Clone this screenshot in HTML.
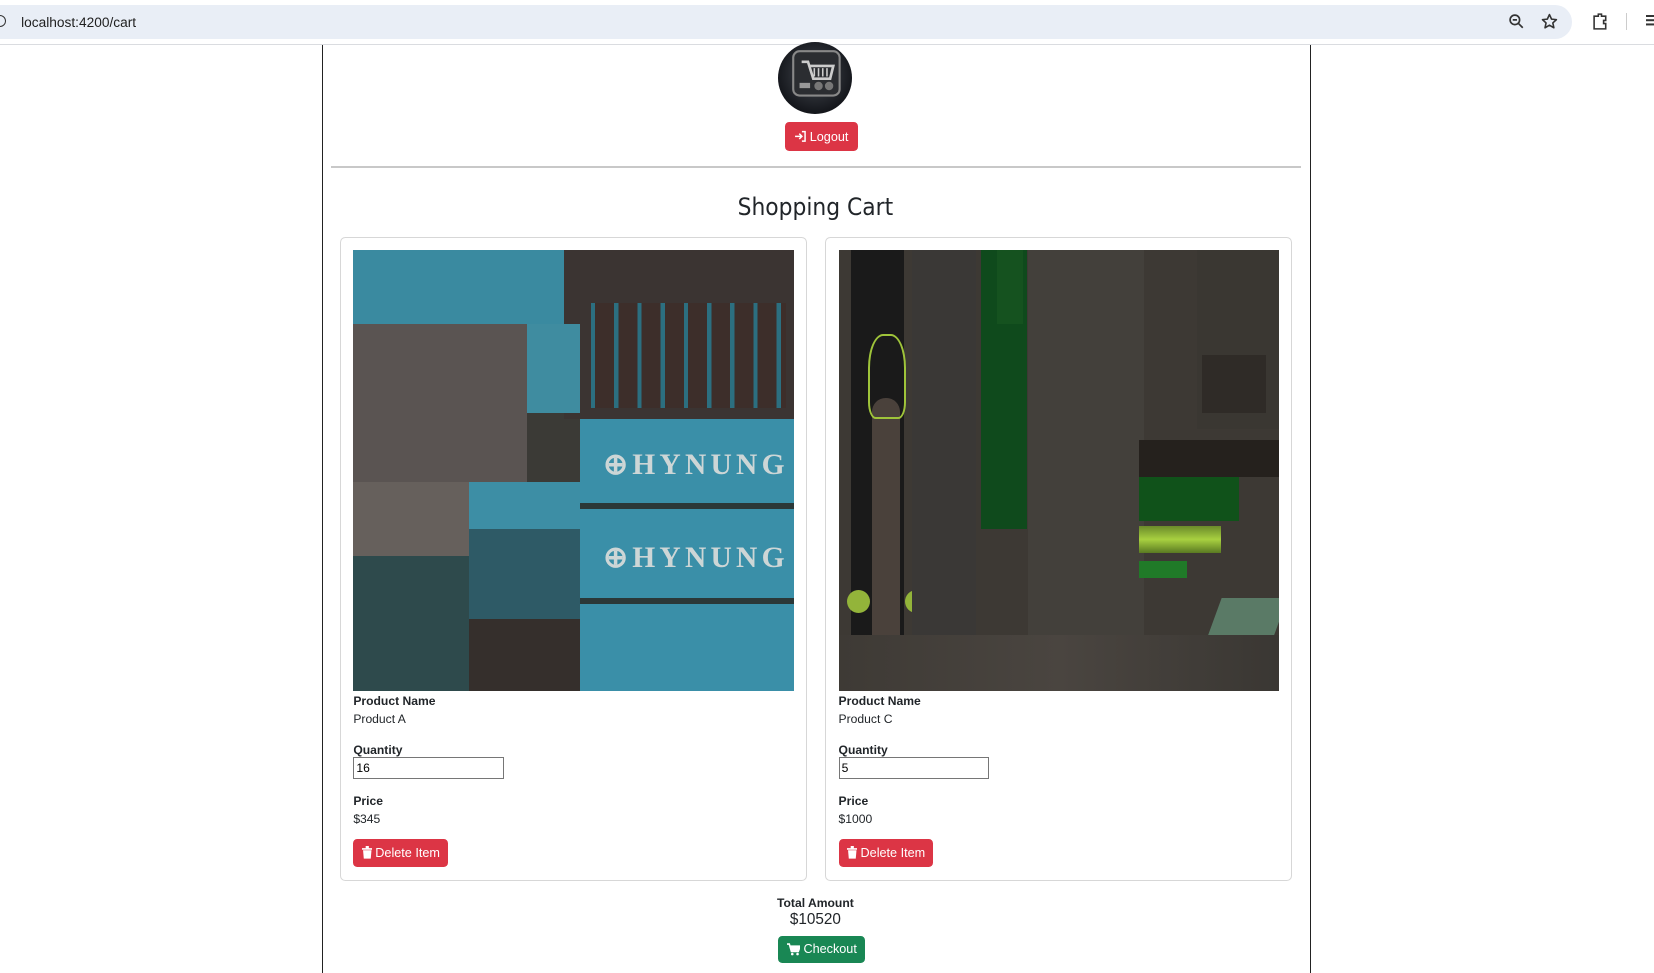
<!DOCTYPE html>
<html><head><meta charset="utf-8"><style>
*{box-sizing:border-box;margin:0;padding:0}
html,body{width:1654px;height:973px;overflow:hidden;background:#fff}
body{font-family:"Liberation Sans",sans-serif;color:#212529}
#w{zoom:1.05485;position:relative;width:1568px;height:922px}
.a{position:absolute}
.bar{left:0;top:0;width:1568px;height:43px;background:#fff;border-bottom:1px solid #dadce0}
.pill{left:-20px;top:5px;width:1510px;height:32px;border-radius:16px;background:#e9eef6}
.url{left:20px;top:14px;font-size:13px;color:#1f1f1f}
.cont{left:305px;top:43px;width:938px;height:879px;border-left:1px solid #222;border-right:1px solid #222}
.btn{position:absolute;border-radius:4px;color:#fff;font-size:12px;display:flex;align-items:center;justify-content:center;gap:3px}
.card{position:absolute;top:225px;width:443px;height:610px;border:1px solid #d7d7d7;border-radius:5px}
.img{position:absolute;left:12px;top:11px;width:418px;height:418px;overflow:hidden}
.lbl{position:absolute;left:12px;font-size:11.5px}
.b{font-weight:bold}
.inp{position:absolute;left:12px;top:492px;width:143px;height:21px;border:1px solid #767676;font-size:11.5px;padding:2px 2px}
</style></head><body><div id="w">
<div class="a bar"></div><div class="a pill"></div>
<div class="a" style="left:-6px;top:14px;width:12px;height:12px;border:1.5px solid #333;border-radius:50%"></div>
<div class="a url">localhost:4200/cart</div>
<svg class="a" style="left:1430px;top:12px" width="16" height="16" viewBox="0 0 16 16"><circle cx="6.5" cy="6.5" r="4.5" fill="none" stroke="#333" stroke-width="1.6"/><path d="M10 10l4 4M4.5 6.5h4" stroke="#333" stroke-width="1.6"/></svg>
<svg class="a" style="left:1461px;top:12px" width="16" height="16" viewBox="0 0 16 16"><path d="M8 1.5l2 4.3 4.6.5-3.4 3.1 1 4.6L8 11.6 3.8 14l1-4.6L1.4 6.3 6 5.8z" fill="none" stroke="#333" stroke-width="1.5" stroke-linejoin="round"/></svg>
<svg class="a" style="left:1509px;top:11px" width="16" height="18" viewBox="0 0 16 18"><path d="M2 4h4V2h3v2h4v4h-2v3h2v5H2z" fill="none" stroke="#333" stroke-width="1.5"/></svg>
<div class="a" style="left:1541px;top:12px;width:1px;height:16px;background:#ccc"></div>
<div class="a" style="left:1560px;top:14px;width:8px;height:2px;background:#333;box-shadow:0 4px #333,0 8px #333"></div>

<div class="a cont"></div>
<div class="a" style="left:738px;top:40px;width:70px;height:68px;border-radius:50%;background:radial-gradient(circle at 50% 45%,#4a4d52 0,#2a2d33 40%,#15171c 70%)"></div>
<svg class="a" style="left:748px;top:45px" width="52" height="50" viewBox="0 0 52 50"><rect x="4" y="4" width="44" height="42" rx="6" fill="#2b2d31" stroke="#888" stroke-width="2"/><path d="M12 14h6l5 16h16l3-12H20" fill="none" stroke="#ccc" stroke-width="2.5"/><path d="M24 20v8M28 20v8M32 20v8M36 20v8" stroke="#ccc" stroke-width="1.5"/><circle cx="28" cy="37" r="4" fill="#777"/><circle cx="38" cy="37" r="4" fill="#777"/><rect x="10" y="34" width="10" height="5" fill="#999"/></svg>
<div class="btn" style="left:744px;top:116px;width:69px;height:27px;background:#dc3545"><svg width="12" height="12" viewBox="0 0 12 12"><path d="M1 6h6M5 3.5L7.5 6 5 8.5M7.5 1.5h3v9h-3" fill="none" stroke="#fff" stroke-width="1.4"/></svg>Logout</div>
<div class="a" style="left:314px;top:157px;width:919px;height:2px;background:#c8c8c8"></div>
<div class="a" style="left:573px;top:182px;width:400px;text-align:center;font-size:23px;font-family:'DejaVu Sans Condensed','Liberation Sans',sans-serif">Shopping Cart</div>

<div class="card" style="left:322px">
<div class="img" style="background:#3b3a36">
<div class="a" style="left:0;top:0;width:200px;height:70px;background:#3a8aa0"></div>
<div class="a" style="left:200px;top:0;width:218px;height:160px;background:#3b3432"></div>
<div class="a" style="left:225px;top:50px;width:185px;height:100px;background:repeating-linear-gradient(90deg,#2c6f80 0 4px,#3d2e2a 4px 22px)"></div>
<div class="a" style="left:165px;top:70px;width:50px;height:85px;background:#3f8ca0"></div>
<div class="a" style="left:0;top:70px;width:165px;height:150px;background:#5a5452"></div>
<div class="a" style="left:0;top:220px;width:110px;height:70px;background:#66605c"></div>
<div class="a" style="left:110px;top:220px;width:105px;height:45px;background:#3d8ea5"></div>
<div class="a" style="left:215px;top:160px;width:203px;height:258px;background:#3a8fa8"></div>
<div class="a" style="left:215px;top:240px;width:203px;height:6px;background:#2b3838"></div>
<div class="a" style="left:215px;top:330px;width:203px;height:6px;background:#2b3838"></div>
<div class="a" style="left:237px;top:187px;font:bold 28px 'Liberation Serif',serif;color:#cdd6d6;letter-spacing:4px">⊕HYNUNG</div>
<div class="a" style="left:237px;top:275px;font:bold 28px 'Liberation Serif',serif;color:#cdd6d6;letter-spacing:4px">⊕HYNUNG</div>
<div class="a" style="left:110px;top:265px;width:105px;height:85px;background:#2e5a66"></div>
<div class="a" style="left:110px;top:350px;width:105px;height:68px;background:#352f2c"></div>
<div class="a" style="left:0;top:290px;width:110px;height:128px;background:#2e4a4c"></div>
</div>
<div class="lbl b" style="top:432px">Product Name</div>
<div class="lbl" style="top:449px">Product A</div>
<div class="lbl b" style="top:478px">Quantity</div>
<input class="inp" value="16">
<div class="lbl b" style="top:527px">Price</div>
<div class="lbl" style="top:544px">$345</div>
<div class="btn" style="left:12px;top:569px;width:90px;height:27px;background:#dc3545"><svg width="10" height="12" viewBox="0 0 10 12"><path d="M0 2h10v1.5H0zM3.5 0h3v2h-3zM1 4h8l-.7 8H1.7z" fill="#fff"/></svg>Delete Item</div>
</div>

<div class="card" style="left:782px">
<div class="img" style="background:#3d3934">
<div class="a" style="left:12px;top:0;width:50px;height:418px;background:#1a1a1a"></div>
<div class="a" style="left:32px;top:140px;width:26px;height:270px;background:#4a413b;border-radius:13px"></div>
<div class="a" style="left:28px;top:80px;width:36px;height:80px;border:2px solid #9fc43a;border-radius:40% 40% 20% 20%"></div>
<div class="a" style="left:8px;top:322px;width:22px;height:22px;border-radius:50%;background:#93b43a"></div>
<div class="a" style="left:63px;top:322px;width:22px;height:22px;border-radius:50%;background:#93b43a"></div>
<div class="a" style="left:70px;top:0;width:60px;height:418px;background:#3a3836"></div>
<div class="a" style="left:135px;top:0;width:44px;height:265px;background:#0f4a1c"></div>
<div class="a" style="left:150px;top:0;width:25px;height:70px;background:#15521f"></div>
<div class="a" style="left:180px;top:0;width:110px;height:418px;background:#43403b"></div>
<div class="a" style="left:285px;top:180px;width:133px;height:35px;background:#25211d"></div>
<div class="a" style="left:285px;top:215px;width:95px;height:42px;background:#10521a"></div>
<div class="a" style="left:285px;top:262px;width:78px;height:25px;background:linear-gradient(#6a8a2a,#a8d040,#5a7a22)"></div>
<div class="a" style="left:285px;top:295px;width:45px;height:16px;background:#207a28"></div>
<div class="a" style="left:340px;top:0;width:78px;height:170px;background:#3a3732"></div>
<div class="a" style="left:345px;top:100px;width:60px;height:55px;background:#2f2b27"></div>
<div class="a" style="left:355px;top:330px;width:63px;height:45px;background:#5a7a66;transform:skewX(-20deg)"></div>
<div class="a" style="left:0;top:365px;width:418px;height:53px;background:linear-gradient(90deg,#3e3a35,#4a4540,#3a3733)"></div>
</div>
<div class="lbl b" style="top:432px">Product Name</div>
<div class="lbl" style="top:449px">Product C</div>
<div class="lbl b" style="top:478px">Quantity</div>
<input class="inp" value="5">
<div class="lbl b" style="top:527px">Price</div>
<div class="lbl" style="top:544px">$1000</div>
<div class="btn" style="left:12px;top:569px;width:90px;height:27px;background:#dc3545"><svg width="10" height="12" viewBox="0 0 10 12"><path d="M0 2h10v1.5H0zM3.5 0h3v2h-3zM1 4h8l-.7 8H1.7z" fill="#fff"/></svg>Delete Item</div>
</div>

<div class="a b" style="left:673px;top:849px;width:200px;text-align:center;font-size:11.5px">Total Amount</div>
<div class="a" style="left:673px;top:864px;width:200px;text-align:center;font-size:14.5px">$10520</div>
<div class="btn" style="left:738px;top:887px;width:82px;height:26px;background:#198754"><svg width="13" height="12" viewBox="0 0 13 12"><path d="M0 1h2.2l2 7h6.5L12.5 3H3" fill="none" stroke="#fff" stroke-width="1.5"/><path d="M3.3 3h9l-1.6 4.5H4.5z" fill="#fff"/><circle cx="5" cy="10.5" r="1.2" fill="#fff"/><circle cx="10" cy="10.5" r="1.2" fill="#fff"/></svg>Checkout</div>
</div></body></html>
